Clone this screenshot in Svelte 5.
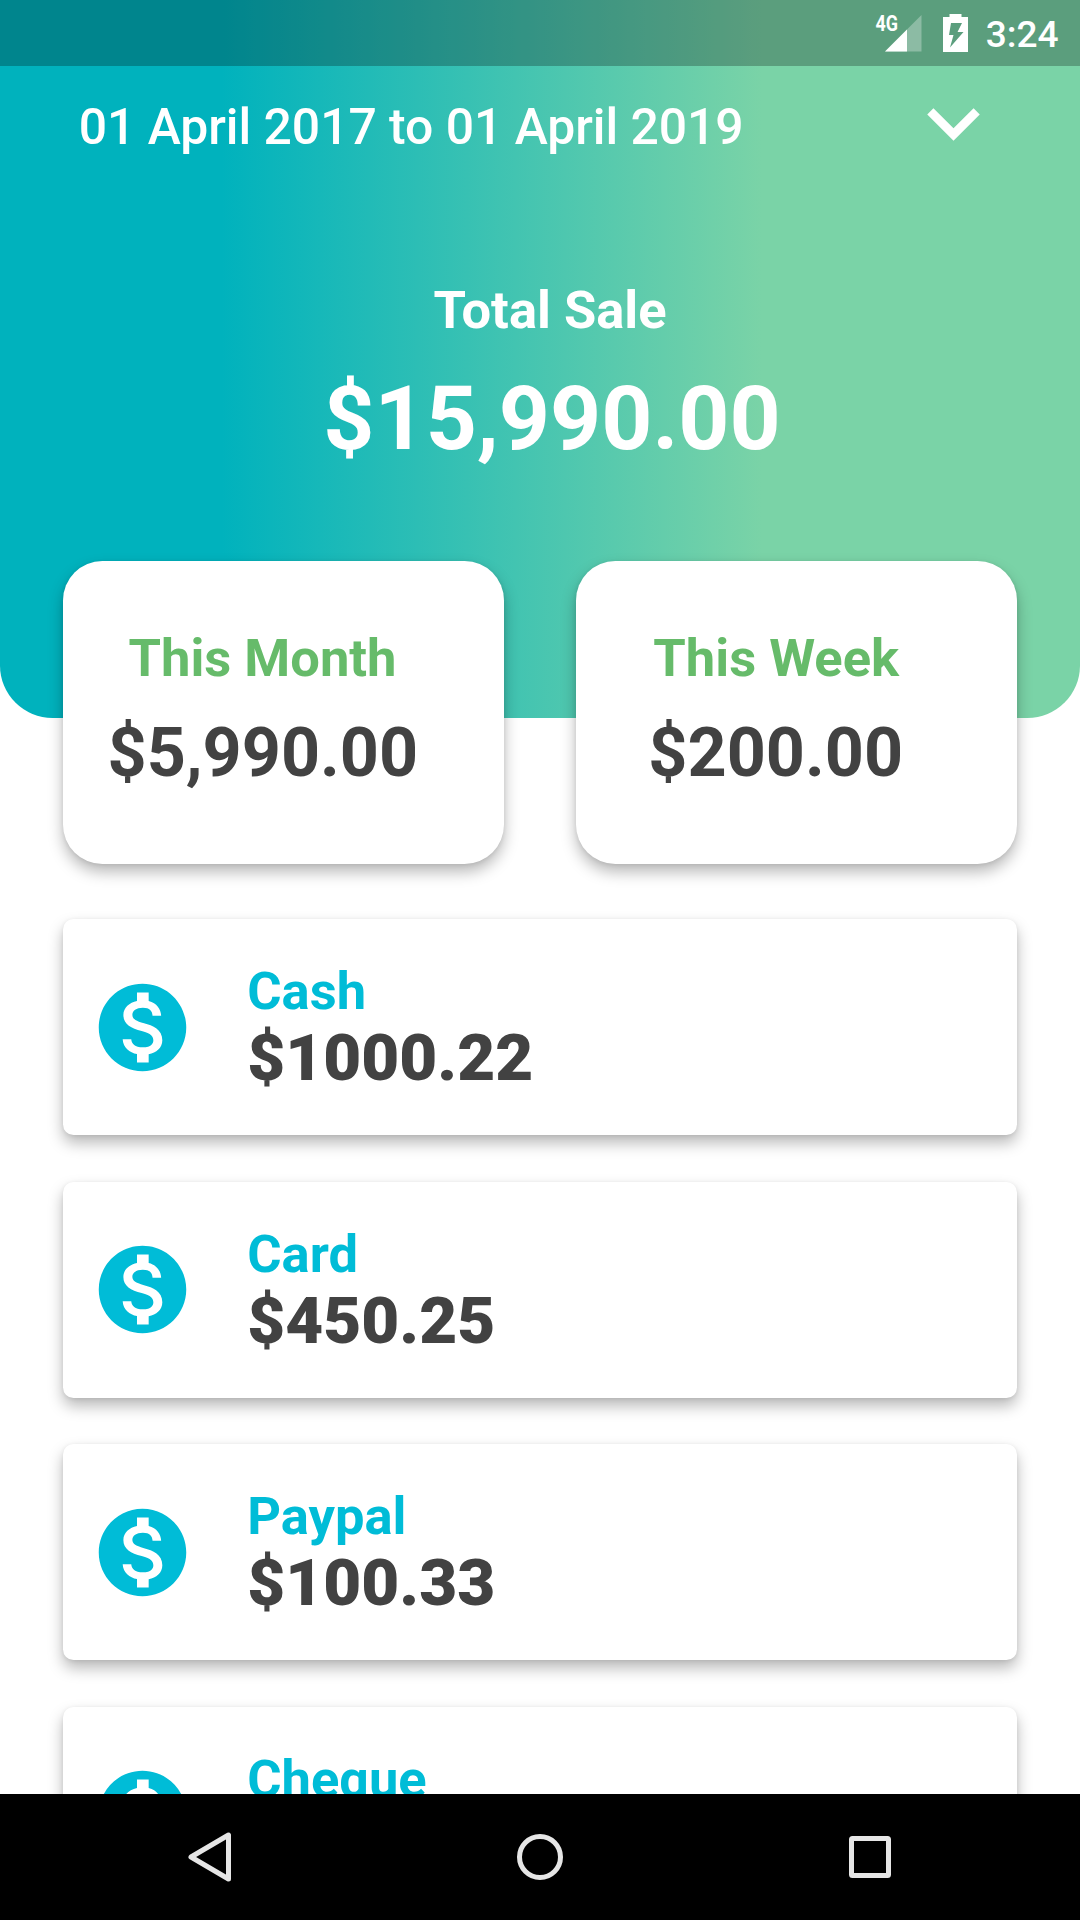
<script>
  const summaries = [
    { id: 'month', label: 'This Month', amount: '$5,990.00' },
    { id: 'week', label: 'This Week', amount: '$200.00' },
  ];
  const payments = [
    { label: 'Cash', amount: '$1000.22' },
    { label: 'Card', amount: '$450.25' },
    { label: 'Paypal', amount: '$100.33' },
    { label: 'Cheque', amount: '' },
  ];
</script>

<div class="screen">
  <header class="hero">
    <div class="status">
      <svg class="signal" width="48" height="40" viewBox="0 0 48 40">
        <path d="M46.500 1V37.500H10Z" fill="#fff" fill-opacity=".3" />
        <path d="M32 15.500V37.500H10Z" fill="#fff" />
        <text x="0.5" y="17" textLength="22.500" lengthAdjust="spacingAndGlyphs">4G</text>
      </svg>
      <svg class="battery" width="25" height="38" viewBox="0 0 25 38">
        <path fill="#fff" fill-rule="evenodd" d="M6.500 0H18.500V3H25V38H0V3H6.500ZM8 9L6 21H10.500L7 33.500L20.500 18H14.500L19 9Z" />
      </svg>
      <span class="time">3:24</span>
    </div>

    <div class="range">
      <span class="dates">01 April 2017 to 01 April 2019</span>
      <svg width="105" height="105" viewBox="0 0 24 24">
        <path fill="#fff" d="M7.410 7.840L12 12.420l4.590-4.580L18 9.250l-6 6-6-6z" />
      </svg>
    </div>

    <div class="total">
      <span class="total-label">Total Sale</span>
      <span class="total-amount">$15,990.00</span>
    </div>
  </header>

  <section class="summaries">
    {#each summaries as item (item.id)}
      <article class="summary {item.id}">
        <span class="summary-label">{item.label}</span>
        <span class="summary-amount">{item.amount}</span>
      </article>
    {/each}
  </section>

  <section class="payments">
    {#each payments as item (item.label)}
      <article class="payment">
        <svg width="105" height="105" viewBox="0 0 24 24">
          <path fill="#00bcd7" d="M12 2C6.480 2 2 6.480 2 12s4.480 10 10 10 10-4.480 10-10S17.520 2 12 2zm1.410 16.090V20h-2.670v-1.930c-1.710-.36-3.160-1.460-3.270-3.400h1.960c.1 1.050.82 1.870 2.650 1.870 1.960 0 2.400-.98 2.400-1.590 0-.83-.44-1.610-2.670-2.140-2.480-.6-4.180-1.620-4.180-3.670 0-1.720 1.390-2.840 3.110-3.210V4h2.670v1.950c1.860.45 2.790 1.860 2.850 3.390H14.300c-.05-1.110-.64-1.870-2.220-1.870-1.500 0-2.400.68-2.400 1.640 0 .84.65 1.390 2.670 1.910s4.180 1.390 4.180 3.910c-.01 1.830-1.380 2.830-3.120 3.160z" />
        </svg>
        <div class="payment-text">
          <span class="payment-label">{item.label}</span>
          <span class="payment-amount">{item.amount}</span>
        </div>
      </article>
    {/each}
  </section>

  <nav class="navbar">
    <svg width="60" height="60" viewBox="0 0 60 60">
      <path d="M48.500 8V52L11 30Z" />
    </svg>
    <svg width="60" height="60" viewBox="0 0 60 60">
      <circle cx="30" cy="30" r="20.500" />
    </svg>
    <svg width="60" height="60" viewBox="0 0 60 60">
      <rect x="11.500" y="11.500" width="37" height="37" rx="1" />
    </svg>
  </nav>
</div>

<style>
  :global(body) {
    margin: 0;
    background: #fff;
  }
  .screen {
    display: flex;
    flex-direction: column;
    width: 1080px;
    height: 1920px;
    overflow: hidden;
    background: #fff;
    font-family: Roboto, sans-serif;
    white-space: nowrap;
  }
  .hero {
    flex: none;
    height: 717.5px;
    border-radius: 0 0 52.5px 52.5px;
    background: linear-gradient(90deg, #00b2bd 20.5%, #7ad3a7 70.5%);
    color: #fff;
  }
  .status {
    display: flex;
    justify-content: flex-end;
    box-sizing: border-box;
    height: 66px;
    padding: 14px 21.5px 0 0;
    background: rgba(0, 0, 0, 0.25);
  }
  .signal {
    overflow: visible;
  }
  .signal text {
    font: 700 22.5px Roboto, sans-serif;
    fill: #fff;
  }
  .battery {
    margin: 0 18px 0 20px;
  }
  .time {
    font-size: 37px;
    font-weight: 500;
    line-height: 41px;
  }
  .range {
    display: flex;
    justify-content: space-between;
    align-items: center;
    padding: 8px 74px 0 78.75px;
  }
  .dates {
    font-size: 49.875px;
    font-weight: 500;
    line-height: 60px;
    letter-spacing: -0.04px;
  }
  .total {
    display: flex;
    flex-direction: column;
    align-items: center;
    padding: 100px 0 0 22px;
  }
  .total-label {
    margin-right: 2px;
    font-size: 52.5px;
    font-weight: 700;
    line-height: 62px;
  }
  .total-amount {
    margin: 25px 0 0 2px;
    font-size: 89.25px;
    font-weight: 700;
    line-height: 105px;
  }
  .summaries {
    flex: none;
    display: flex;
    justify-content: space-between;
    margin-top: -157px;
    padding: 0 63.4px;
  }
  .summary {
    display: flex;
    flex-direction: column;
    box-sizing: border-box;
    width: 440.3px;
    height: 303px;
    padding-top: 66px;
    border-radius: 39.4px;
    background: #fff;
    box-shadow: 0 8px 15px rgba(0, 0, 0, 0.28), 0 1px 4px rgba(0, 0, 0, 0.08);
  }
  .summary-label {
    padding-left: 65.1px;
    color: #66bb6a;
    font-size: 52.5px;
    font-weight: 700;
    line-height: 62px;
  }
  .summary-amount {
    margin-top: 24px;
    padding-left: 44.1px;
    color: #424242;
    font-size: 68.25px;
    font-weight: 700;
    line-height: 80px;
  }
  .week .summary-label {
    padding-left: 77px;
  }
  .week .summary-amount {
    padding-left: 72px;
  }
  .payments {
    flex: 1;
    min-height: 0;
    display: flex;
    flex-direction: column;
    gap: 46.5px;
    overflow: hidden;
    padding: 55.7px 63.4px 0;
  }
  .payment {
    flex: none;
    display: flex;
    align-items: center;
    box-sizing: border-box;
    height: 216px;
    padding-left: 26.35px;
    border-radius: 10.5px;
    background: #fff;
    box-shadow: 0 8px 15px rgba(0, 0, 0, 0.28), 0 1px 4px rgba(0, 0, 0, 0.08);
  }
  .payment svg {
    margin-top: 0.6px;
  }
  .payment-text {
    display: flex;
    flex-direction: column;
    padding-left: 52.5px;
  }
  .payment-label {
    color: #00bcd7;
    font-size: 52.5px;
    font-weight: 700;
    line-height: 62px;
  }
  .payment-amount {
    min-height: 72px;
    color: #424242;
    font-size: 65.6px;
    font-weight: 900;
    line-height: 72px;
  }
  .navbar {
    flex: none;
    display: flex;
    justify-content: center;
    align-items: center;
    gap: 270px;
    height: 126px;
    background: #000;
  }
  .navbar svg {
    fill: none;
    stroke: #e6e6e6;
    stroke-width: 5px;
    stroke-linejoin: round;
  }
</style>
